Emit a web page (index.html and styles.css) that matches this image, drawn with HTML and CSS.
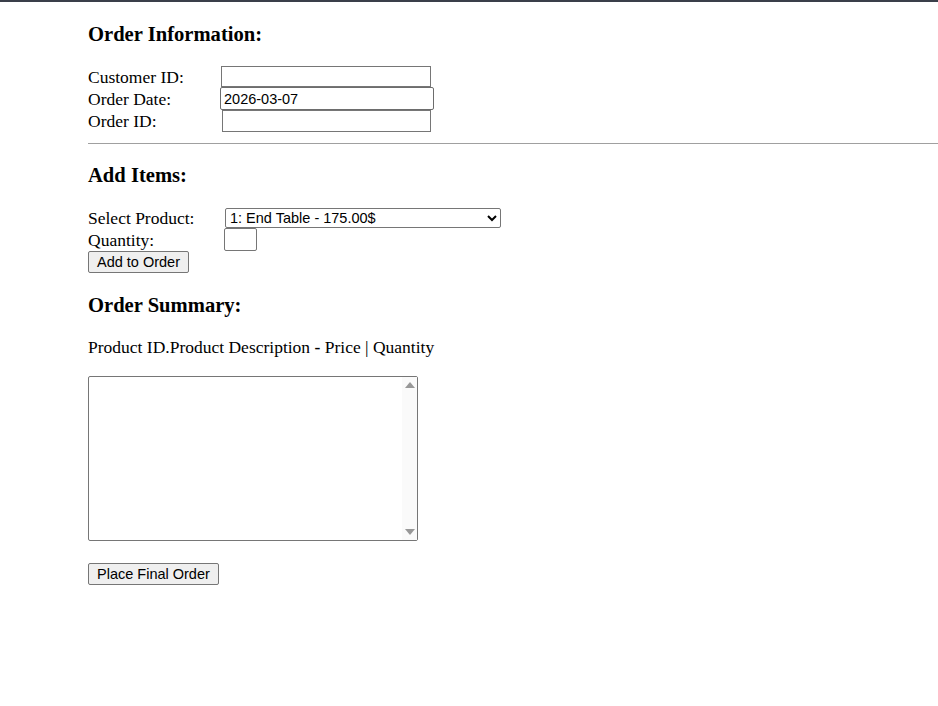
FILE: index.html
```html
<!DOCTYPE html>
<html>
<head>
<meta charset="utf-8">
<title>Order</title>
<link rel="stylesheet" href="styles.css">
</head>
<body>
<div class="page">
  <h3 class="heading h-info">Order Information:</h3>
  <div class="fields">
    <label class="lbl">Customer ID:</label>
    <input class="txt cust" type="text">
    <label class="lbl">Order Date:</label>
    <input class="txt date" type="text" value="2026-03-07">
    <label class="lbl">Order ID:</label>
    <input class="txt oid" type="text">
  </div>
  <hr class="rule">
  <h3 class="heading h-items">Add Items:</h3>
  <div class="fields items">
    <label class="lbl">Select Product:</label>
    <select class="sel">
      <option>1: End Table - 175.00$</option>
      <option>2: Coffee Table - 250.00$</option>
    </select>
    <label class="lbl">Quantity:</label>
    <input class="txt qty" type="text">
  </div>
  <button class="btn">Add to Order</button>
  <h3 class="heading h-summary">Order Summary:</h3>
  <p class="legend">Product ID.Product Description <b>-</b> Price | Quantity</p>
  <div class="summary-wrap">
    <textarea class="summary"></textarea>
    <div class="fake-scroll" aria-hidden="true">
      <span class="arrow up"></span>
      <span class="arrow down"></span>
    </div>
  </div>
  <div class="final"><button class="btn">Place Final Order</button></div>
</div>
</body>
</html>
```

FILE: styles.css
```css
html, body {
  margin: 0;
  padding: 0;
  background: #fff;
}
body {
  border-top: 2px solid #3a3f4a;
  font-family: "Liberation Serif", "Times New Roman", serif;
  font-size: 17.5px;
  color: #000;
}
.page {
  padding-left: 88px;
}
.heading {
  font-size: 20.6px;
  font-weight: bold;
  margin: 0;
  line-height: 24px;
}
.h-info { padding: 20px 0 20px; }
.h-items { padding: 19px 0 21px; }
.h-summary { padding: 20px 0 20px; }
.fields {
  display: grid;
  grid-template-columns: 132px auto;
  align-items: center;
  justify-items: start;
}
.lbl {
  line-height: 18px;
}
.txt {
  font-family: "Liberation Sans", Arial, sans-serif;
  font-size: 14.5px;
  border: 1px solid #767676;
  border-radius: 0;
  padding: 1px 2px;
  margin: 0;
  height: 21px;
  box-sizing: border-box;
  background: #fff;
  color: #000;
}
.cust { width: 210px; margin-left: 1px; }
.date { width: 214px; height: 23px; border-radius: 2px; border-color: #6d6d6d; padding-left: 3px; }
.oid { width: 209px; margin-left: 2px; height: 22px; }
.sel {
  font-family: "Liberation Sans", Arial, sans-serif;
  font-size: 14.5px;
  width: 276px;
  height: 20px;
  margin: 0 0 0 5px;
  padding: 0;
  border: 1px solid #767676;
  border-radius: 2px;
  background: #fff;
  color: #000;
}
.qty {
  width: 33px;
  height: 23px;
  margin-left: 4px;
  border-radius: 2px;
}
.btn {
  font-family: "Liberation Sans", Arial, sans-serif;
  font-size: 14.5px;
  height: 22px;
  padding: 0 8px;
  margin: 0;
  border: 1px solid #767676;
  border-radius: 2px;
  background: #efefef;
  color: #000;
  display: block;
}
.rule {
  margin: 11px 0 0;
  border: none;
  border-top: 1px solid #a0a0a0;
  height: 0;
}
.legend {
  margin: 0 0 19px;
  line-height: 20px;
}
.summary-wrap {
  position: relative;
  width: 330px;
  height: 165px;
}
.summary {
  display: block;
  width: 330px;
  height: 165px;
  box-sizing: border-box;
  margin: 0;
  border: 1px solid #767676;
  border-radius: 2px;
  overflow-y: scroll;
  resize: none;
  padding: 2px 18px 2px 2px;
}
.fake-scroll {
  position: absolute;
  top: 1px;
  right: 1px;
  bottom: 1px;
  width: 15px;
  background: #fafafa;
  pointer-events: none;
}
.arrow {
  position: absolute;
  left: 3px;
  width: 0;
  height: 0;
  border-left: 5px solid transparent;
  border-right: 5px solid transparent;
}
.arrow.up {
  top: 5px;
  border-bottom: 6px solid #989898;
}
.arrow.down {
  bottom: 5px;
  border-top: 6px solid #989898;
}
.final {
  padding-top: 22px;
}
```
